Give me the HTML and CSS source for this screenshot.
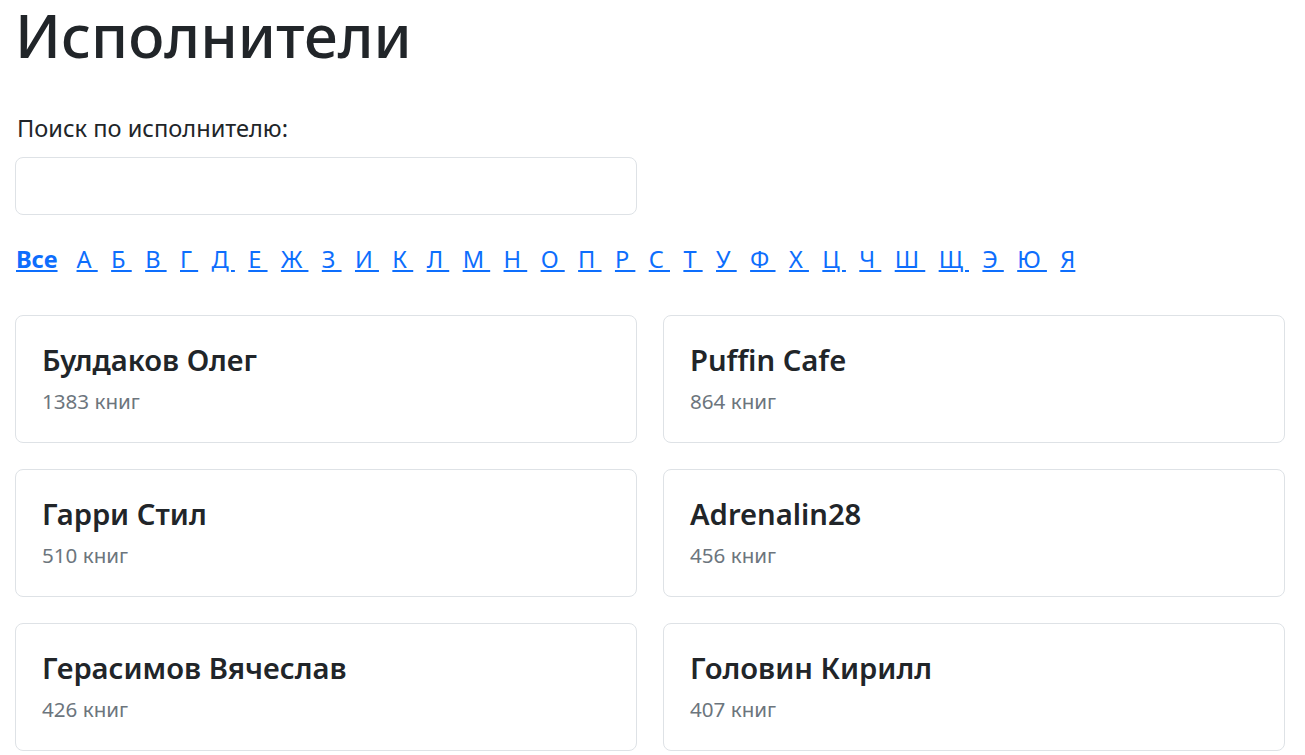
FILE: index.html
```html
<!DOCTYPE html>
<html lang="ru">
<head>
<meta charset="utf-8">
<title>Исполнители</title>
<link rel="stylesheet" href="styles.css">
</head>
<body>
<main class="page">
  <h1 class="title">Исполнители</h1>
  <div class="search">
    <label class="search-label" for="q">Поиск по исполнителю:</label>
    <input class="search-input" id="q" type="text">
  </div>
  <nav class="letters">
    <a href="#" class="letter all">Все</a>
    <a href="#" class="letter">А&nbsp;</a>
    <a href="#" class="letter">Б&nbsp;</a>
    <a href="#" class="letter">В&nbsp;</a>
    <a href="#" class="letter">Г&nbsp;</a>
    <a href="#" class="letter">Д&nbsp;</a>
    <a href="#" class="letter">Е&nbsp;</a>
    <a href="#" class="letter">Ж&nbsp;</a>
    <a href="#" class="letter">З&nbsp;</a>
    <a href="#" class="letter">И&nbsp;</a>
    <a href="#" class="letter">К&nbsp;</a>
    <a href="#" class="letter">Л&nbsp;</a>
    <a href="#" class="letter">М&nbsp;</a>
    <a href="#" class="letter">Н&nbsp;</a>
    <a href="#" class="letter">О&nbsp;</a>
    <a href="#" class="letter">П&nbsp;</a>
    <a href="#" class="letter">Р&nbsp;</a>
    <a href="#" class="letter">С&nbsp;</a>
    <a href="#" class="letter">Т&nbsp;</a>
    <a href="#" class="letter">У&nbsp;</a>
    <a href="#" class="letter">Ф&nbsp;</a>
    <a href="#" class="letter">Х&nbsp;</a>
    <a href="#" class="letter">Ц&nbsp;</a>
    <a href="#" class="letter">Ч&nbsp;</a>
    <a href="#" class="letter">Ш&nbsp;</a>
    <a href="#" class="letter">Щ&nbsp;</a>
    <a href="#" class="letter">Э&nbsp;</a>
    <a href="#" class="letter">Ю&nbsp;</a>
    <a href="#" class="letter">Я</a>
  </nav>
  <section class="grid">
    <article class="card"><h5 class="card-title">Булдаков Олег</h5><p class="card-sub">1383 книг</p></article>
    <article class="card"><h5 class="card-title">Puffin Cafe</h5><p class="card-sub">864 книг</p></article>
    <article class="card"><h5 class="card-title">Гарри Стил</h5><p class="card-sub">510 книг</p></article>
    <article class="card"><h5 class="card-title">Adrenalin28</h5><p class="card-sub">456 книг</p></article>
    <article class="card"><h5 class="card-title">Герасимов Вячеслав</h5><p class="card-sub">426 книг</p></article>
    <article class="card"><h5 class="card-title">Головин Кирилл</h5><p class="card-sub">407 книг</p></article>
  </section>
</main>
</body>
</html>
```

FILE: styles.css
```css
* { box-sizing: border-box; }
html, body { margin: 0; padding: 0; background: #fff; }
body {
  font-family: "Noto Sans", "Open Sans", "DejaVu Sans", sans-serif;
  color: #212529;
  font-size: 23.6px;
  line-height: 36px;
  overflow: hidden;
}
.page {
  padding: 0 20px 0 15px;
}
.title {
  margin: 0;
  font-size: 60px;
  line-height: 70px;
  font-weight: 500;
  color: #212529;
}
.search {
  margin-top: 40px;
  width: 622px;
  display: flex;
  flex-direction: column;
}
.search-label {
  display: block;
  padding-left: 2px;
  margin-bottom: 11px;
}
.search-input {
  height: 58px;
  width: 100%;
  border: 1px solid #dee2e6;
  border-radius: 8px;
  background: #fff;
  font: inherit;
  padding: 0 16px;
}
.letters {
  margin-top: 26px;
  display: flex;
  flex-wrap: wrap;
  padding-left: 1px;
}
.letter {
  color: #0d6efd;
  text-decoration: underline;
  margin-right: 13.4px;
}
.letter.all {
  font-weight: 700;
  margin-right: 19px;
}
.grid {
  margin-top: 38px;
  display: grid;
  grid-template-columns: 1fr 1fr;
  column-gap: 26px;
  row-gap: 26px;
}
.card {
  border: 1px solid #dee2e6;
  border-radius: 8px;
  height: 128px;
  padding: 26px 26px 0 26px;
}
.card-title {
  margin: 0 0 8px 0;
  font-size: 29.2px;
  line-height: 36px;
  font-weight: 600;
  color: #212529;
}
.card-sub {
  margin: 0;
  font-size: 20.6px;
  line-height: 31px;
  color: #6c757d;
}
```
